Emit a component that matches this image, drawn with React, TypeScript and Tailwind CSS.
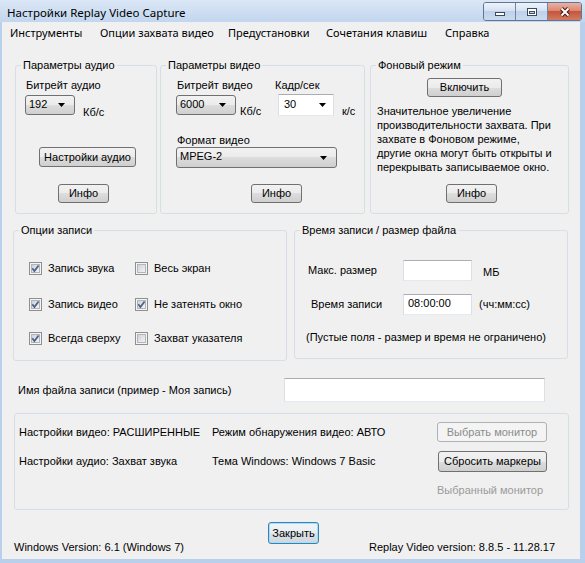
import type { ReactNode } from 'react';

const body = "font-['Liberation_Sans',Arial,sans-serif] text-[11px] leading-[13px]";
const ui = "font-['Noto_Sans','Open_Sans',sans-serif] text-[11px]";
const caption = "font-['Noto_Sans','Open_Sans',sans-serif] text-[11.5px]";

const menuItems: Array<[string, string]> = [
  ['Инструменты', 'w-[90px]'],
  ['Опции захвата видео', 'w-[128px]'],
  ['Предустановки', 'w-[98px]'],
  ['Сочетания клавиш', 'w-[119px]'],
  ['Справка', ''],
];

function Arrow() {
  return (
    <svg width="7" height="4" viewBox="0 0 7 4" className="shrink-0">
      <polygon points="0,0 7,0 3.5,4" fill="#000" />
    </svg>
  );
}

function Button({
  children,
  className = '',
  disabled,
  primary,
}: {
  children: ReactNode;
  className?: string;
  disabled?: boolean;
  primary?: boolean;
}) {
  const skin = disabled
    ? 'border-[#adb2b5] bg-[#f4f4f4] text-[#8b8b8b]'
    : primary
      ? 'border-[#3c7fb1] bg-[linear-gradient(#f2f5f8_0%,#e9edf1_50%,#dbe2e8_50%,#cfd7de_100%)] shadow-[inset_0_0_0_1px_#9fe0fb]'
      : 'border-[#707070] bg-[linear-gradient(#f2f2f2_0%,#ebebeb_50%,#dddddd_50%,#cfcfcf_100%)]';
  return (
    <button
      type="button"
      className={`flex shrink-0 items-center justify-center rounded-[3px] border ${skin} ${className}`}
    >
      {children}
    </button>
  );
}

function Combo({ value, className = '', editable }: { value: string; className?: string; editable?: boolean }) {
  const skin = editable
    ? 'rounded-[1px] border-[#abadb3] border-b-[#e3e9ef] border-x-[#dbdfe6] bg-white pl-[5px] pr-[7px]'
    : 'rounded-[3px] border-[#707070] bg-[linear-gradient(#f2f2f2_0%,#ebebeb_50%,#dddddd_50%,#cfcfcf_100%)] pl-[3px] pr-[9px]';
  return (
    <div className={`flex shrink-0 items-center justify-between border ${skin} ${className}`}>
      <span className="-mt-[2px]">{value}</span>
      <Arrow />
    </div>
  );
}

function TextBox({ value = '', className = '' }: { value?: string; className?: string }) {
  return (
    <div
      className={`flex shrink-0 items-center border border-[#dbdfe6] border-t-[#abadb3] border-b-[#e3e9ef] bg-white pl-[4px] ${className}`}
    >
      <span className="-mt-[2px]">{value}</span>
    </div>
  );
}

function Check({ label, checked, className = '' }: { label: string; checked?: boolean; className?: string }) {
  return (
    <div className={`flex items-center gap-[6px] ${className}`}>
      <svg width="13" height="13" viewBox="0 0 13 13" className="shrink-0">
        <defs>
          <linearGradient id="cb" x1="0" y1="0" x2="1" y2="1">
            <stop offset="0" stopColor="#cbcfd5" />
            <stop offset="1" stopColor="#f6f6f6" />
          </linearGradient>
        </defs>
        <rect x="0.5" y="0.5" width="12" height="12" fill="#f4f4f4" stroke="#8f8f8f" />
        <rect x="2.5" y="2.5" width="8" height="8" fill="url(#cb)" stroke="#b2b6bc" strokeWidth="1" />
        {checked && (
          <path d="M3.3 6.3 L5.4 9 L9.6 3.4" fill="none" stroke="#4a5f8a" strokeWidth="1.7" />
        )}
      </svg>
      <span className="whitespace-nowrap">{label}</span>
    </div>
  );
}

function GroupBox({ title, className = '', children }: { title?: string; className?: string; children: ReactNode }) {
  return (
    <fieldset className={`shrink-0 rounded-[3px] border border-[#d5dfe5] ${className}`}>
      {title && <legend className="ml-[5px] px-[2px] leading-[13px]">{title}</legend>}
      {children}
    </fieldset>
  );
}

function TitleBar() {
  return (
    <div className="flex h-[22px] shrink-0 items-start bg-[linear-gradient(#dbe7f6,#c2d6ee)]">
      <span className={`${caption} pl-[7px] pt-[5px] leading-[16px] text-black`}>Настройки Replay Video Capture</span>
      <div className="ml-auto mr-[3px] mt-[2px] flex h-[19px] overflow-hidden rounded-[3px] border border-[#5e7594]">
        <div className="flex w-[32px] items-end justify-center border-r border-[#6f85a3] bg-[linear-gradient(#eef3fa_0%,#d6e2f2_45%,#bfd1ea_50%,#c9daf0_100%)] pb-[3px]">
          <svg width="12" height="6" viewBox="0 0 12 6">
            <rect x="1.5" y="1.5" width="9" height="3" fill="#fff" stroke="#3a4a60" />
          </svg>
        </div>
        <div className="flex w-[32px] items-center justify-center border-r border-[#6f85a3] bg-[linear-gradient(#eef3fa_0%,#d6e2f2_45%,#bfd1ea_50%,#c9daf0_100%)]">
          <svg width="12" height="10" viewBox="0 0 12 10">
            <rect x="1.5" y="1.5" width="9" height="7" fill="#fff" stroke="#3a4a60" />
            <rect x="3.5" y="4.5" width="5" height="2" fill="#c9d8ec" stroke="#3a4a60" />
          </svg>
        </div>
        <div className="flex w-[33px] items-center justify-center bg-[linear-gradient(#eab2a3_0%,#db8772_45%,#c6553e_50%,#d27a61_100%)]">
          <svg width="14" height="12" viewBox="0 0 14 12">
            <path d="M3.5 2.5 L10.5 9.5 M10.5 2.5 L3.5 9.5" stroke="#47160d" strokeWidth="4" />
            <path d="M3.5 2.5 L10.5 9.5 M10.5 2.5 L3.5 9.5" stroke="#fff" strokeWidth="2" />
          </svg>
        </div>
      </div>
    </div>
  );
}

export default function App() {
  return (
    <div className={`flex h-[563px] w-[585px] flex-col overflow-hidden bg-[#b9d0ec] ${body} text-black`}>
      <TitleBar />
      <div className="mb-[4px] ml-[2px] mr-[5px] flex flex-1 flex-col bg-[#f0f0f0]">
        {/* menu */}
        <div className={`${ui} flex h-[22px] shrink-0 items-center pl-[8px] leading-[16px]`}>
          {menuItems.map(([label, width]) => (
            <span key={label} className={`whitespace-nowrap ${width}`}>
              {label}
            </span>
          ))}
        </div>

        {/* audio / video / background */}
        <div className="ml-[13px] mt-[15px] flex items-start">
          <GroupBox title="Параметры аудио" className="w-[142px]">
            <div className="flex h-[141px] flex-col items-start">
              <span className="ml-[10px] mt-[7px]">Битрейт аудио</span>
              <div className="ml-[9px] mt-[3px] flex items-start">
                <Combo value="192" className="h-[20px] w-[50px]" />
                <span className="ml-[8px] mt-[11px]">Кб/с</span>
              </div>
              <Button className="ml-[23px] mt-[28px] h-[20px] w-[97px]">Настройки аудио</Button>
              <Button className="ml-[42px] mt-[17px] h-[19px] w-[51px]">Инфо</Button>
            </div>
          </GroupBox>

          <GroupBox title="Параметры видео" className="ml-[3px] w-[205px]">
            <div className="flex h-[141px] flex-col items-start">
              <div className="mt-[7px] flex">
                <span className="ml-[16px] w-[98px]">Битрейт видео</span>
                <span>Кадр/сек</span>
              </div>
              <div className="mt-[2px] flex h-[24px] items-start">
                <div className="ml-[15px] flex w-[102px] items-start">
                  <Combo value="6000" className="mt-[1px] h-[20px] w-[60px]" />
                  <span className="ml-[4px] mt-[11px]">Кб/с</span>
                </div>
                <Combo value="30" editable className="h-[22px] w-[56px]" />
                <span className="ml-[8px] mt-[11px]">к/с</span>
              </div>
              <span className="ml-[16px] mt-[16px]">Формат видео</span>
              <Combo value="MPEG-2" className="ml-[15px] h-[21px] w-[161px]" />
              <Button className="ml-[90px] mt-[16px] h-[19px] w-[51px]">Инфо</Button>
            </div>
          </GroupBox>

          <GroupBox title="Фоновый режим" className="ml-[5px] w-[199px]">
            <div className="flex h-[141px] flex-col items-start">
              <Button className="ml-[56px] mt-[6px] h-[19px] w-[75px]">Включить</Button>
              <p className="ml-[6px] mt-[7px] whitespace-nowrap leading-[14px]">
                Значительное увеличение
                <br />
                производительности захвата. При
                <br />
                захвате в Фоновом режиме,
                <br />
                другие окна могут быть открыты и
                <br />
                перекрывать записываемое окно.
              </p>
              <Button className="ml-[75px] mt-[10px] h-[19px] w-[51px]">Инфо</Button>
            </div>
          </GroupBox>
        </div>

        {/* record options / limits */}
        <div className="ml-[11px] mt-[10px] flex items-start">
          <GroupBox title="Опции записи" className="w-[274px]">
            <div className="flex h-[123px] flex-col">
              <div className="mt-[25px] flex h-[13px] items-center">
                <Check label="Запись звука" checked className="ml-[15px] w-[106px]" />
                <Check label="Весь экран" />
              </div>
              <div className="mt-[23px] flex h-[13px] items-center">
                <Check label="Запись видео" checked className="ml-[15px] w-[106px]" />
                <Check label="Не затенять окно" checked />
              </div>
              <div className="mt-[21px] flex h-[13px] items-center">
                <Check label="Всегда сверху" checked className="ml-[15px] w-[106px]" />
                <Check label="Захват указателя" />
              </div>
            </div>
          </GroupBox>

          <GroupBox title="Время записи / размер файла" className="ml-[7px] w-[274px]">
            <div className="flex h-[121px] flex-col items-start">
              <div className="mt-[23px] flex h-[21px] items-center">
                <span className="ml-[13px] w-[95px]">Макс. размер</span>
                <TextBox className="h-[21px] w-[69px]" />
                <span className="ml-[11px] mt-[3px]">МБ</span>
              </div>
              <div className="mt-[13px] flex h-[21px] items-center">
                <span className="ml-[16px] w-[92px]">Время записи</span>
                <TextBox value="08:00:00" className="h-[21px] w-[69px]" />
                <span className="ml-[7px]">(чч:мм:сс)</span>
              </div>
              <span className="ml-[11px] mt-[16px] whitespace-nowrap">
                (Пустые поля - размер и время не ограничено)
              </span>
            </div>
          </GroupBox>
        </div>

        {/* file name */}
        <div className="mt-[17px] flex h-[24px] items-center">
          <span className="ml-[16px] w-[266px]">Имя файла записи (пример - Моя запись)</span>
          <TextBox className="h-[24px] w-[261px]" />
        </div>

        {/* status panel */}
        <div className="ml-[12px] mt-[11px] flex h-[97px] w-[555px] flex-col rounded-[3px] border border-[#d5dfe5]">
          <div className="mt-[8px] flex h-[20px] items-center">
            <span className="ml-[4px] w-[193px] whitespace-nowrap">Настройки видео: РАСШИРЕННЫЕ</span>
            <span className="w-[225px] whitespace-nowrap">Режим обнаружения видео: АВТО</span>
            <Button disabled className="h-[20px] w-[110px]">
              Выбрать монитор
            </Button>
          </div>
          <div className="mt-[9px] flex h-[21px] items-center">
            <span className="ml-[4px] w-[193px] whitespace-nowrap">Настройки аудио: Захват звука</span>
            <span className="w-[225px] whitespace-nowrap">Тема Windows: Windows 7 Basic</span>
            <Button className="ml-[1px] h-[21px] w-[109px]">Сбросить маркеры</Button>
          </div>
          <span className="ml-[422px] mt-[12px] whitespace-nowrap text-[#9a9a9a]">Выбранный монитор</span>
        </div>

        {/* footer */}
        <div className="mt-[12px] flex h-[32px]">
          <span className="ml-[12px] w-[254px] self-end whitespace-nowrap">Windows Version: 6.1 (Windows 7)</span>
          <Button primary className="h-[22px] w-[51px]">
            Закрыть
          </Button>
          <span className="ml-[50px] self-end whitespace-nowrap">Replay Video version: 8.8.5 - 11.28.17</span>
        </div>
      </div>
    </div>
  );
}
